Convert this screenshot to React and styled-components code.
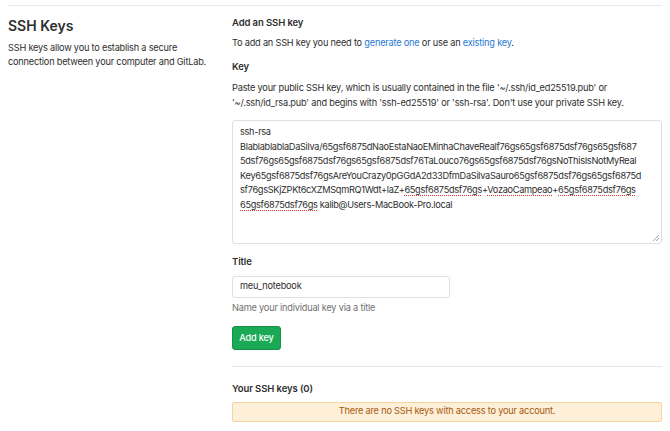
import React from "react";
import styled, { createGlobalStyle } from "styled-components";

const Global = createGlobalStyle`
  html, body { margin: 0; padding: 0; background: #fff; }
  body {
    font-family: Inter, "Noto Sans", "Liberation Sans", sans-serif;
    color: #2e2e2e;
    font-size: 9.2px;
    letter-spacing: -0.2px;
    line-height: 14.5px;
    -webkit-font-smoothing: antialiased;
  }
`;

const Page = styled.div`
  padding: 5px 8px 0;
`;

const Section = styled.section`
  border-top: 1px solid #e8e8e8;
  display: grid;
  grid-template-columns: 224px minmax(0, 1fr);
`;

const Aside = styled.div`
  padding-top: 10.5px;
`;

const Heading = styled.h4`
  margin: 0;
  font-size: 14px;
  line-height: 17px;
  letter-spacing: 0;
  font-weight: 600;
  color: #2e2e2e;
`;

const Lead = styled.p`
  margin: 7px 0 0;
  color: #2e2e2e;
`;

const Main = styled.div`
  padding-top: 9.5px;
  display: flex;
  flex-direction: column;
  min-width: 0;
`;

const Label = styled.div`
  font-size: 9.5px;
  letter-spacing: -0.1px;
  font-weight: 600;
  margin-top: ${(p) => p.$mt || 0}px;
`;

const Text = styled.p`
  margin: ${(p) => p.$mt || 0}px 0 0;
`;

const Link = styled.a`
  color: #1f78d1;
  text-decoration: none;
`;

const KeyBox = styled.div`
  position: relative;
  margin-top: 9.5px;
  height: 124px;
  box-sizing: border-box;
  border: 1px solid #dfdfdf;
  border-radius: 3px;
  padding: 4.5px 7px;
  white-space: pre;
  overflow: hidden;
  letter-spacing: -0.3px;
  color: #2e2e2e;
`;

const Misspelled = styled.span`
  text-decoration: underline dotted #e0352b;
  text-decoration-thickness: 1px;
  text-underline-offset: 2px;
`;

const Grip = styled.svg`
  position: absolute;
  right: 1px;
  bottom: 1px;
`;

const Input = styled.div`
  margin-top: 6px;
  width: 218px;
  height: 22px;
  box-sizing: border-box;
  border: 1px solid #dfdfdf;
  border-radius: 3px;
  padding: 0 7px;
  display: flex;
  align-items: center;
`;

const Help = styled.p`
  margin: 3.5px 0 0;
  color: #707070;
`;

const Button = styled.button`
  margin-top: 10px;
  align-self: flex-start;
  width: 49px;
  height: 24px;
  padding: 0;
  border: 1px solid #168f48;
  border-radius: 3px;
  background: #1aaa55;
  color: #fff;
  font-family: inherit;
  font-size: 9.2px;
  letter-spacing: -0.2px;
  font-weight: 500;
`;

const Divider = styled.hr`
  margin: 16px 0 0;
  border: 0;
  border-top: 1px solid #e5e5e5;
`;

const Alert = styled.div`
  margin-top: 5px;
  height: 20px;
  box-sizing: border-box;
  border: 1px solid #f8d39c;
  border-radius: 2px;
  background: #feefd9;
  color: #a65a0c;
  display: flex;
  align-items: center;
  justify-content: center;
`;

export default function App() {
  return (
    <Page>
      <Global />
      <Section>
        <Aside>
          <Heading>SSH Keys</Heading>
          <Lead>
            SSH keys allow you to establish a secure
            <br />
            connection between your computer and GitLab.
          </Lead>
        </Aside>
        <Main>
          <Label>Add an SSH key</Label>
          <Text $mt={5.5}>
            To add an SSH key you need to <Link href="#">generate one</Link> or use an{" "}
            <Link href="#">existing key</Link>.
          </Text>
          <Label $mt={10}>Key</Label>
          <Text $mt={6.5}>
            Paste your public SSH key, which is usually contained in the file '~/.ssh/id_ed25519.pub' or
            <br />
            '~/.ssh/id_rsa.pub' and begins with 'ssh-ed25519' or 'ssh-rsa'. Don't use your private SSH key.
          </Text>
          <KeyBox role="textbox" aria-multiline="true">
            {"ssh-rsa\n"}
            {"BlablablablaDaSilva/65gsf6875dNaoEstaNaoEMinhaChaveRealf76gs65gsf6875dsf76gs65gsf687\n"}
            {"5dsf76gs65gsf6875dsf76gs65gsf6875dsf76TaLouco76gs65gsf6875dsf76gsNoThisIsNotMyReal\n"}
            {"Key65gsf6875dsf76gsAreYouCrazy0pGGdA2d33DfmDaSilvaSauro65gsf6875dsf76gs65gsf6875d\n"}
            {"sf76gsSKjZPKt6cXZMSqmRQ1Wdt+laZ+"}
            <Misspelled>65gsf6875dsf76gs</Misspelled>+<Misspelled>VozaoCampeao</Misspelled>+
            <Misspelled>65gsf6875dsf76gs</Misspelled>
            {"\n"}
            <Misspelled>65gsf6875dsf76gs</Misspelled>
            {" kalib@Users-MacBook-Pro.local"}
            <Grip width="8" height="8" viewBox="0 0 8 8">
              <line x1="7" y1="1" x2="1" y2="7" stroke="#8a8a8a" strokeWidth="0.8" />
              <line x1="7" y1="4" x2="4" y2="7" stroke="#8a8a8a" strokeWidth="0.8" />
            </Grip>
          </KeyBox>
          <Label $mt={11.5}>Title</Label>
          <Input>meu_notebook</Input>
          <Help>Name your individual key via a title</Help>
          <Button>Add key</Button>
          <Divider />
          <Label $mt={15.5}>Your SSH keys (0)</Label>
          <Alert>There are no SSH keys with access to your account.</Alert>
        </Main>
      </Section>
    </Page>
  );
}
